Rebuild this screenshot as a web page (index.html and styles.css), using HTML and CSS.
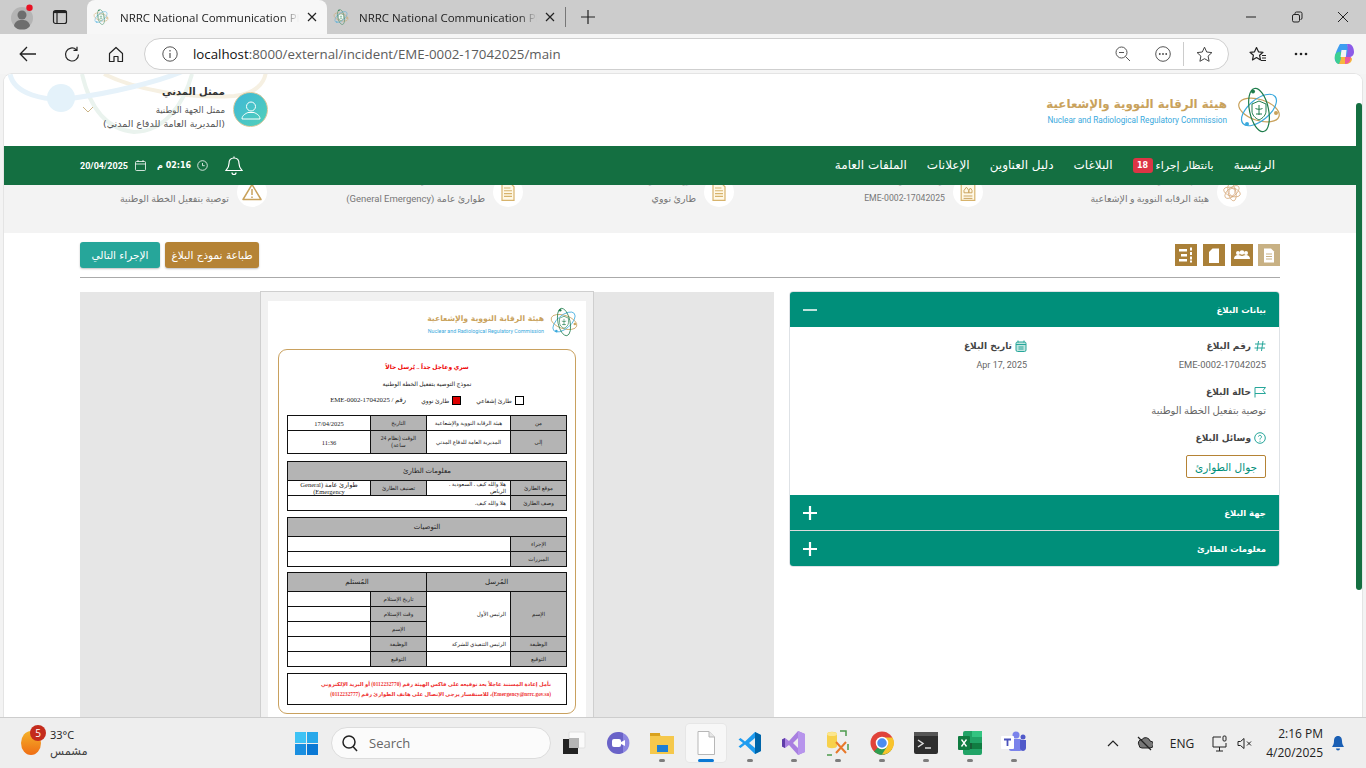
FILE: index.html
```html
<!DOCTYPE html>
<html lang="ar">
<head>
<meta charset="utf-8">
<title>NRRC National Communication Platform</title>
<link rel="stylesheet" href="styles.css">
</head>
<body>
<svg class="defs" aria-hidden="true">
  <symbol id="atom" viewBox="0 0 44 46">
    <ellipse cx="22" cy="23" rx="21" ry="10.5" transform="rotate(18 22 23)" fill="none" stroke="#c9a25c" stroke-width="1.2"/>
    <ellipse cx="22" cy="23" rx="21" ry="10.5" transform="rotate(-40 22 23)" fill="none" stroke="#3aa9dd" stroke-width="1.2"/>
    <ellipse cx="22" cy="23" rx="22" ry="9.5" transform="rotate(78 22 23)" fill="none" stroke="#1f7d4c" stroke-width="1.2"/>
    <circle cx="16" cy="4.500" r="2" fill="#1f7d4c"/>
    <circle cx="39" cy="26" r="2" fill="#c9a25c"/>
    <circle cx="10" cy="37" r="2" fill="#3aa9dd"/>
    <path d="M15 17l7-3 7 3v7c0 4-3 7-7 9-4-2-7-5-7-9z" fill="#fff" stroke="#1f7d4c" stroke-width="1"/>
    <path d="M22 18v10M18.500 21.500c2 1 5 1 7 0M19 27h6" stroke="#1f7d4c" stroke-width="1" fill="none"/>
  </symbol>
  <symbol id="atomgold" viewBox="0 0 44 46">
    <ellipse cx="22" cy="23" rx="21" ry="10.5" transform="rotate(18 22 23)" fill="none" stroke="#d6a878" stroke-width="1.800"/>
    <ellipse cx="22" cy="23" rx="21" ry="10.5" transform="rotate(-40 22 23)" fill="none" stroke="#d6a878" stroke-width="1.800"/>
    <ellipse cx="22" cy="23" rx="22" ry="9.5" transform="rotate(78 22 23)" fill="none" stroke="#d6a878" stroke-width="1.800"/>
    <path d="M15 17l7-3 7 3v7c0 4-3 7-7 9-4-2-7-5-7-9z" fill="#fff" stroke="#c98f5c" stroke-width="1.500"/>
  </symbol>
  <symbol id="report" viewBox="0 0 20 24">
    <path d="M2.500 1.500h11l4 4v17h-15z" fill="#fff8e6" stroke="#d7b36c" stroke-width="1.500"/>
    <path d="M5 7h8M5 10.500h10M5 14h10M5 17.500h10" stroke="#d7b36c" stroke-width="1.400"/>
  </symbol>
  <symbol id="reporthouse" viewBox="0 0 20 24">
    <path d="M1.500 1.500h17v21h-17z" fill="#fff8e6" stroke="#d7b36c" stroke-width="1.500"/>
    <path d="M5 10l3-4 3 4v3H5zM11 10l2-3 2 3v3h-4zM4.500 17h11M4.500 20h11" fill="none" stroke="#c9a25c" stroke-width="1.200"/>
  </symbol>
  <symbol id="plus" viewBox="0 0 14 14"><path d="M7 0v14M0 7h14" stroke="#fff" stroke-width="2.200"/></symbol>
</svg>

<div class="window">
  <header class="tabstrip">
    <div class="profile">
      <svg width="24" height="26" viewBox="0 0 24 26"><circle cx="12" cy="14" r="11" fill="#b4b4b4"/><circle cx="12" cy="11" r="4.500" fill="#6e6e6e"/><path d="M4 22c1-5 4-6 8-6s7 1 8 6c-2 3-5 3.500-8 3.500S6 25 4 22z" fill="#6e6e6e"/><circle cx="19.500" cy="3.800" r="3.200" fill="#e81123"/></svg>
    </div>
    <div class="tabicon">
      <svg width="16" height="16" viewBox="0 0 16 16"><rect x="1.500" y="1.500" width="13" height="13" rx="2" fill="none" stroke="#222" stroke-width="1.200"/><path d="M5 1.500v13" stroke="#222" stroke-width="1.200"/><path d="M1.500 3h13" stroke="#222" stroke-width="2.200"/></svg>
    </div>
    <div class="tab tab-active">
      <svg class="favicon" width="16" height="16"><use href="#atom"/></svg>
      <span class="tab-title">NRRC National Communication Platform</span>
      <svg class="tab-close" width="10" height="10" viewBox="0 0 10 10"><path d="M1 1l8 8M9 1l-8 8" stroke="#222" stroke-width="1.200"/></svg>
    </div>
    <div class="tab">
      <svg class="favicon" width="16" height="16"><use href="#atom"/></svg>
      <span class="tab-title">NRRC National Communication Platform</span>
      <svg class="tab-close" width="10" height="10" viewBox="0 0 10 10"><path d="M1 1l8 8M9 1l-8 8" stroke="#222" stroke-width="1.200"/></svg>
    </div>
    <div class="tabsep"></div>
    <svg class="newtab" width="14" height="14" viewBox="0 0 14 14"><path d="M7 0v14M0 7h14" stroke="#222" stroke-width="1.200"/></svg>
    <div class="winctl">
      <svg width="12" height="12" viewBox="0 0 12 12"><path d="M1 6h10" stroke="#222" stroke-width="1"/></svg>
      <svg width="12" height="12" viewBox="0 0 12 12"><rect x="1.500" y="3.500" width="7" height="7.500" rx="1.500" fill="none" stroke="#222"/><path d="M4 3V2.500A1.500 1.500 0 0 1 5.500 1H9.500A1.500 1.500 0 0 1 11 2.500V7A1.500 1.500 0 0 1 9.500 8.500" fill="none" stroke="#222"/></svg>
      <svg width="12" height="12" viewBox="0 0 12 12"><path d="M1 1l10 10M11 1L1 11" stroke="#222" stroke-width="1"/></svg>
    </div>
  </header>

  <nav class="toolbar">
    <svg class="tool tool-back" width="18" height="16" viewBox="0 0 18 16"><path d="M17 8H1.500M8 1L1.200 8 8 15" fill="none" stroke="#222" stroke-width="1.300"/></svg>
    <svg class="tool tool-reload" width="17" height="17" viewBox="0 0 17 17"><path d="M14.500 8.500a6.500 6.500 0 1 1-2.200-4.900M13 .8v3.500H9.500" fill="none" stroke="#222" stroke-width="1.200"/></svg>
    <svg class="tool tool-home" width="16" height="17" viewBox="0 0 16 17"><path d="M1.500 7.500L8 1.500l6.500 6v8h-4.500v-5H6v5H1.500z" fill="none" stroke="#222" stroke-width="1.200" stroke-linejoin="round"/></svg>
    <div class="urlbar">
      <svg class="url-info" width="16" height="16" viewBox="0 0 16 16"><circle cx="8" cy="8" r="7.200" fill="none" stroke="#555"/><path d="M8 7v5M8 4v1.500" stroke="#555" stroke-width="1.200"/></svg>
      <span class="url"><b>localhost</b>:8000/external/incident/EME-0002-17042025/main</span>
      <svg class="url-tool" width="16" height="16" viewBox="0 0 16 16"><circle cx="6.500" cy="6.500" r="5.500" fill="none" stroke="#555"/><path d="M10.500 10.500L15 15M4 6.500h5" stroke="#555"/></svg>
      <svg class="url-tool url-more" width="16" height="16" viewBox="0 0 16 16"><circle cx="8" cy="8" r="7.300" fill="none" stroke="#555"/><circle cx="4.800" cy="8" r=".9" fill="#444"/><circle cx="8" cy="8" r=".9" fill="#444"/><circle cx="11.200" cy="8" r=".9" fill="#444"/></svg>
      <span class="url-sep"></span>
      <svg class="url-tool url-star" width="17" height="17" viewBox="0 0 17 17"><path d="M8.500 1.200l2.200 4.800 5.200.6-3.800 3.500 1 5.200-4.600-2.600-4.600 2.600 1-5.200L1.100 6.600l5.200-.6z" fill="none" stroke="#444" stroke-linejoin="round"/></svg>
    </div>
    <svg class="tool tool-fav" width="18" height="17" viewBox="0 0 18 17"><path d="M7.500 1.500l2 4.300 4.500.5-3.400 3 .9 4.600-4-2.300-4 2.300.9-4.600-3.400-3 4.500-.5z" fill="none" stroke="#222" stroke-width="1.200" stroke-linejoin="round"/><path d="M13 9.500h4M13 12h4M12 14.500h5" stroke="#222"/></svg>
    <svg class="tool tool-dots" width="14" height="4" viewBox="0 0 14 4"><circle cx="2" cy="2" r="1.300" fill="#222"/><circle cx="7" cy="2" r="1.300" fill="#222"/><circle cx="12" cy="2" r="1.300" fill="#222"/></svg>
    <svg class="tool tool-copilot" width="22" height="22" viewBox="0 0 22 22">
      <path d="M7 1h7c1 3 3 8 2 13-1 3-3 6-5 7H6c-3-1-5-4-4-7 0-3 3-10 5-13z" fill="#3d9df0"/>
      <path d="M14 1h2c3 0 5 4 5 8 0 3-2 5-5 5h-3c2-4 2-9 1-13z" fill="#8c5be8"/>
      <path d="M2 12c1-3 4-4 6-3 1 3 0 8-2 12-3 0-5-5-4-9z" fill="#3ccf91"/>
      <path d="M8 14h8c2 0 3 1 3 2 0 3-3 5-6 5H6c1-2 2-5 2-7z" fill="#f6b73c"/>
      <path d="M12 14h6l-1 4c-1 2-3 3-5 3z" fill="#ee5a9c"/>
      <path d="M8.500 7h5l-.6 7H7.500z" fill="#f4f4f4"/>
    </svg>
  </nav>

  <div class="viewport">
    <main class="page" dir="rtl">
      <section class="masthead">
        <svg class="watermark" width="270" height="64" viewBox="0 0 270 64">
          <path d="M100 0C130 15 180 25 230 22C250 20 262 10 262 -5" fill="none" stroke="#f6f0e2" stroke-width="4"/>
          <path d="M78 0C85 30 100 55 130 58C160 58 180 30 188 0" fill="none" stroke="#eaf3ee" stroke-width="4"/>
          <path d="M6 0C10 20 40 28 70 24S160 8 190 -8" fill="none" stroke="#e6f2fa" stroke-width="5"/>
          <circle cx="57" cy="24" r="14" fill="#e4f2fa"/>
        </svg>
        <div class="brand">
          <svg class="brand-mark" width="44" height="46"><use href="#atom"/></svg>
          <div class="brand-text">
            <div class="brand-ar">هيئة الرقابة النووية والإشعاعية</div>
            <div class="brand-en" dir="ltr">Nuclear and Radiological Regulatory Commission</div>
          </div>
        </div>
        <div class="user">
          <div class="avatar">
            <svg width="22" height="22" viewBox="0 0 22 22"><circle cx="11" cy="7.500" r="4.500" fill="none" stroke="#fff"/><path d="M2 20c0-4 4-5.500 6-6.500h6c2 1 6 2.500 6 6.500z" fill="none" stroke="#fff"/></svg>
          </div>
          <div class="user-text">
            <div class="user-name">ممثل المدني</div>
            <div class="user-line">ممثل الجهة الوطنية</div>
            <div class="user-line user-org">(المديرية العامة للدفاع المدني)</div>
          </div>
          <svg class="user-caret" width="12" height="7" viewBox="0 0 12 7"><path d="M1 1l5 5 5-5" fill="none" stroke="#cbb486"/></svg>
        </div>
      </section>

      <section class="mainnav">
        <ul class="navlinks">
          <li>الرئيسية</li>
          <li class="nav-pending"><span class="nav-pending-label">بانتظار إجراء</span> <span class="navbadge">18</span></li>
          <li>البلاغات</li>
          <li>دليل العناوين</li>
          <li>الإعلانات</li>
          <li>الملفات العامة</li>
        </ul>
        <div class="navmeta">
          <svg class="bell" width="18" height="20" viewBox="0 0 18 20"><path d="M9 2c-3.500 0-5 2.500-5 5.500 0 3-1 5-3 7h16c-2-2-3-4-3-7C14 4.500 12.500 2 9 2zM7 16.500a2 2 0 0 0 4 0M9 .5V2" fill="none" stroke="#fff" stroke-width="1.200"/></svg>
          <svg width="11" height="11" viewBox="0 0 11 11"><circle cx="5.500" cy="5.500" r="4.800" fill="none" stroke="#fff" stroke-width=".8"/><path d="M5.500 3v2.700h2.200" fill="none" stroke="#fff" stroke-width=".8"/></svg>
          <span class="navtime">02:16 م</span>
          <svg class="navcal" width="11" height="11" viewBox="0 0 11 11"><rect x=".5" y="1.500" width="10" height="9" rx="1" fill="none" stroke="#fff" stroke-width=".8"/><path d="M.5 4h10M3 0v2M8 0v2" stroke="#fff" stroke-width=".8"/></svg>
          <span class="navdate">20/04/2025</span>
        </div>
      </section>

      <section class="summary">
        <div class="sumitem">
          <span class="sumicon"><svg width="18" height="20"><use href="#atomgold"/></svg></span>
          <div><div class="sumlabel">الجهة المرسلة</div><div class="sumvalue">هيئة الرقابه النووية و الإشعاعية</div></div>
        </div>
        <div class="sumitem">
          <span class="sumicon"><svg width="16" height="20"><use href="#reporthouse"/></svg></span>
          <div><div class="sumlabel">رقم البلاغ</div><div class="sumvalue sumvalue-num">EME-0002-17042025</div></div>
        </div>
        <div class="sumitem">
          <span class="sumicon"><svg width="16" height="20"><use href="#report"/></svg></span>
          <div><div class="sumlabel">نوع الطارئ</div><div class="sumvalue">طارئ نووي</div></div>
        </div>
        <div class="sumitem">
          <span class="sumicon"><svg width="16" height="20"><use href="#report"/></svg></span>
          <div><div class="sumlabel">تصنيف الطارئ</div><div class="sumvalue">طوارئ عامة (General Emergency)</div></div>
        </div>
        <div class="sumitem">
          <span class="sumicon"><svg width="20" height="18" viewBox="0 0 20 18"><path d="M10 1.500L19 16.500H1z" fill="none" stroke="#c9a25c" stroke-width="1.500" stroke-linejoin="round"/><path d="M10 6v6M10 13.500v1.500" stroke="#c9a25c" stroke-width="1.500"/></svg></span>
          <div><div class="sumlabel">الحالة</div><div class="sumvalue">توصية بتفعيل الخطة الوطنية</div></div>
        </div>
      </section>

      <section class="actions">
        <div class="viewtabs">
          <span class="viewtab viewtab-on"><svg width="12" height="15" viewBox="0 0 12 15"><path d="M1 .5h7l3 3v11H1z" fill="#fff"/><path d="M3 6h6M3 8.500h6M3 11h6" stroke="#c8b184"/></svg></span>
          <span class="viewtab"><svg width="16" height="10" viewBox="0 0 16 10"><circle cx="4" cy="3" r="2" fill="#fff"/><circle cx="12" cy="3" r="2" fill="#fff"/><circle cx="8" cy="2.500" r="2.300" fill="#fff"/><path d="M0 9c0-3 2-4 4-4s3 1 4 1 2-1 4-1 4 1 4 4z" fill="#fff"/></svg></span>
          <span class="viewtab"><svg width="10" height="15" viewBox="0 0 10 15"><path d="M3.500 .5H10v14.500H0V4z" fill="#fff"/></svg></span>
          <span class="viewtab"><svg width="14" height="16" viewBox="0 0 14 16"><path d="M0 2h8v2.500H0zM2 7h6v2.500H2zM0 12h8v2.500H0zM11 .5h2v3h-2zM11 5h2v3h-2zM11 9.500h2v3h-2zM11 13.500h2v2h-2z" fill="#fff"/></svg></span>
        </div>
        <div class="actionbtns">
          <span class="btn btn-gold">طباعة نموذج البلاغ</span>
          <span class="btn btn-teal">الإجراء التالي</span>
        </div>
      </section>

      <section class="workspace">
        <div class="accordion">
          <div class="acc-head">
            <span>بيانات البلاغ</span>
            <svg width="14" height="14" viewBox="0 0 14 14"><path d="M0 7h14" stroke="#fff" stroke-width="1.500"/></svg>
          </div>
          <div class="acc-body">
            <div class="field">
              <div class="field-label"><svg width="12" height="12" viewBox="0 0 12 12"><path d="M4.500 1L3 11M9 1L7.500 11M1 4h10.500M.5 8H11" stroke="#26a69a" stroke-width="1"/></svg>رقم البلاغ</div>
              <div class="field-value field-num">EME-0002-17042025</div>
            </div>
            <div class="field">
              <div class="field-label"><svg width="12" height="12" viewBox="0 0 12 12"><rect x="1" y="2" width="10" height="9.500" rx="1.500" fill="#bfe5df" stroke="#26a69a"/><path d="M3 .5v2M9 .5v2M1 4.500h10M3.500 7h5M3.500 9h5" stroke="#26a69a"/></svg>تاريخ البلاغ</div>
              <div class="field-value field-date">Apr 17, 2025</div>
            </div>
            <div class="field field-wide">
              <div class="field-label"><svg width="12" height="12" viewBox="0 0 12 12"><path d="M1 11.500V1.500h10.500L9 4.500l2.500 3H1" fill="none" stroke="#26a69a"/></svg>حالة البلاغ</div>
              <div class="field-value">توصية بتفعيل الخطة الوطنية</div>
            </div>
            <div class="field field-wide">
              <div class="field-label"><svg width="12" height="12" viewBox="0 0 12 12"><circle cx="6" cy="6" r="5.300" fill="none" stroke="#26a69a"/><path d="M4.500 4.500C4.500 3 7.500 3 7.500 4.800 7.500 6 6 6 6 7.500M6 8.800v1" fill="none" stroke="#26a69a"/></svg>وسائل البلاغ</div>
              <span class="chip">جوال الطوارئ</span>
            </div>
          </div>
          <div class="acc-head acc-closed">
            <span>جهة البلاغ</span>
            <svg width="14" height="14"><use href="#plus"/></svg>
          </div>
          <div class="acc-head acc-closed">
            <span>معلومات الطارئ</span>
            <svg width="14" height="14"><use href="#plus"/></svg>
          </div>
        </div>

        <div class="viewer">
          <div class="sheet">
            <div class="sheet-brand">
              <svg width="28" height="30"><use href="#atom"/></svg>
              <div>
                <div class="sheet-ar">هيئة الرقابة النووية والإشعاعية</div>
                <div class="sheet-en" dir="ltr">Nuclear and Radiological Regulatory Commission</div>
              </div>
            </div>
            <div class="form">
              <div class="form-title">سري وعاجل جداً .. يُرسل حالاً</div>
              <div class="form-sub">نموذج التوصية بتفعيل الخطة الوطنية</div>
              <div class="form-kinds">
                <span class="kind"><i class="box"></i>طارئ إشعاعي</span>
                <span class="kind"><i class="box box-on"></i>طارئ نووي</span>
                <span class="kind kind-no">رقم / EME-0002-17042025</span>
              </div>

              <table class="ft t1">
                <colgroup><col class="c1"><col class="c2"><col class="c3"><col class="c4"></colgroup>
                <tr class="r15"><th>من</th><td>هيئة الرقابة النووية والإشعاعية</td><th>التاريخ</th><td class="big">17/04/2025</td></tr>
                <tr class="r23"><th>إلى</th><td>المديرية العامة للدفاع المدني</td><th>الوقت (نظام 24<br>ساعة)</th><td class="big">11:36</td></tr>
              </table>

              <table class="ft t2">
                <colgroup><col class="c1"><col class="c2"><col class="c3"><col class="c4"></colgroup>
                <tr class="r19"><th colspan="4" class="head">معلومات الطارئ</th></tr>
                <tr class="r15"><th>موقع الطارئ</th><td class="ra">هلا والله كيف . السعودية .<br>الرياض</td><th>تصنيف الطارئ</th><td class="big">طوارئ عامة (General<br>Emergency)</td></tr>
                <tr class="r15"><th>وصف الطارئ</th><td colspan="3" class="ra">هلا والله كيف.</td></tr>
              </table>

              <table class="ft t3">
                <colgroup><col class="c1"><col class="c2"><col class="c3"><col class="c4"></colgroup>
                <tr class="r19"><th colspan="4" class="head">التوصيات</th></tr>
                <tr class="r15"><th>الإجراء</th><td colspan="3"></td></tr>
                <tr class="r15"><th>المبررات</th><td colspan="3"></td></tr>
              </table>

              <table class="ft">
                <colgroup><col class="c1"><col class="c2"><col class="c3"><col class="c4"></colgroup>
                <tr class="r19"><th colspan="2" class="head">المُرسل</th><th colspan="2" class="head">المُستلم</th></tr>
                <tr class="r15"><th rowspan="3">الإسم</th><td rowspan="3" class="ra">الرئيس الأول</td><th>تاريخ الإستلام</th><td></td></tr>
                <tr class="r15"><th>وقت الإستلام</th><td></td></tr>
                <tr class="r15"><th>الإسم</th><td></td></tr>
                <tr class="r15"><th>الوظيفة</th><td class="ra">الرئيس التنفيذي للشركة</td><th>الوظيفة</th><td></td></tr>
                <tr class="r15"><th>التوقيع</th><td></td><th>التوقيع</th><td></td></tr>
              </table>

              <div class="form-note">نأمل إعادة المستند عاجلاً بعد توقيعه على فاكس الهيئة رقم (0112232770) أو البريد الإلكتروني (Emergency@nrrc.gov.sa)، للاستفسار يرجى الإتصال على هاتف الطوارئ رقم (0112232777)</div>
            </div>
          </div>
        </div>
      </section>
    </main>
    <div class="scrolltrack"><div class="scrollthumb"></div></div>
  </div>

  <footer class="taskbar">
    <div class="weather">
      <span class="sun"></span>
      <span class="weather-badge">5</span>
      <div class="weather-text"><div>33°C</div><div class="weather-sub">مشمس</div></div>
    </div>
    <div class="tasks">
      <svg class="winlogo" width="23" height="23" viewBox="0 0 23 23"><rect width="11" height="11" fill="#3ec3f5"/><rect x="12" width="11" height="11" fill="#28a8ea"/><rect y="12" width="11" height="11" fill="#1a8fe0"/><rect x="12" y="12" width="11" height="11" fill="#0a78d4"/></svg>
      <div class="search">
        <svg width="16" height="17" viewBox="0 0 16 17"><circle cx="7" cy="7" r="6" fill="none" stroke="#222" stroke-width="1.500"/><path d="M11 11.500l4 4.500" stroke="#222" stroke-width="1.500"/></svg>
        <span>Search</span>
      </div>
      <div class="task"><svg width="24" height="24" viewBox="0 0 24 24"><rect x="7" y="1" width="16" height="16" rx="1" fill="#fafafa" stroke="#e0e0e0"/><rect x="7" y="7" width="10" height="10" fill="#b5b5b5"/><path d="M1 8h6v9h9v6H1z" fill="#222"/></svg></div>
      <div class="task"><svg width="24" height="24" viewBox="0 0 24 24"><path d="M12 1a11 11 0 1 0 0 22c2 0 4-.5 5-1V2c-1-.6-3-1-5-1z" fill="#6a63c8"/><path d="M17 2a11 11 0 0 1 0 20z" fill="#8d87e0"/><rect x="6" y="8" width="9" height="8" rx="2" fill="#fff"/><path d="M15 11l4-2v6l-4-2z" fill="#fff"/></svg></div>
      <div class="task"><svg width="26" height="24" viewBox="0 0 26 24"><path d="M1 2h9l2 3h13v18H1z" fill="#f5c84c"/><rect x="1" y="2" width="10" height="3" fill="#d9a21e"/><rect x="8" y="14" width="11" height="7" fill="#1d7ed6"/></svg><i class="pip"></i></div>
      <div class="task task-on"><svg width="18" height="24" viewBox="0 0 18 24"><path d="M1 .5h11l5.500 5.500v17.500H1z" fill="#fff" stroke="#b7b7b7"/><path d="M12 .5V6h5.500" fill="#e6e6e6" stroke="#b7b7b7"/></svg><i class="activebar"></i></div>
      <div class="task"><svg width="24" height="24" viewBox="0 0 24 24"><path d="M17 1l6 3v16l-6 3L7 13.500 2.500 17 .5 15.500 5 12 .5 8.500 2.500 7 7 10.500z" fill="#1f9cf0"/><path d="M17 7l-6 5 6 5z" fill="#eee"/><path d="M17 1l6 3v16l-6 3z" fill="#0065a9"/></svg><i class="pip"></i></div>
      <div class="task"><svg width="24" height="26" viewBox="0 0 24 26"><path d="M16 1l7 3v18l-7 3L7 15l-4 3-3-1.500V9.500L3 8l4 3z" fill="#a87fe0"/><path d="M16 8l-5 5 5 5z" fill="#eee"/><path d="M0 9.500L3 8v10l-3-1.500z" fill="#5e3ca8"/><path d="M16 1l7 3v18l-7 3z" fill="#b794ec"/></svg><i class="pip"></i></div>
      <div class="task"><svg width="24" height="26" viewBox="0 0 24 26"><path d="M1 4c0-3 10-3 10 0v12c0 3-10 3-10 0z" fill="#f7d14c"/><ellipse cx="6" cy="4" rx="5" ry="2" fill="#fbe68f"/><path d="M14 1h6v5M1 25h5M22 14v6" stroke="#4c9a4c" stroke-width="1.500" fill="none"/><path d="M10 12l10 11M20 12L10 23" stroke="#e8782a" stroke-width="2"/></svg><i class="pip"></i></div>
      <div class="task"><svg width="24" height="24" viewBox="0 0 24 24"><circle cx="12" cy="12" r="11.500" fill="#e0433a"/><path d="M12 12L22 18A11.500 11.500 0 0 1 4 20.500z" fill="#2f9e4f"/><path d="M12 6.500h10.500A11.500 11.500 0 0 1 12 23.500L18 14z" fill="#f8c42c"/><circle cx="12" cy="12" r="5.500" fill="#4a8df0" stroke="#fff" stroke-width="1.500"/></svg><i class="pip"></i></div>
      <div class="task"><svg width="24" height="22" viewBox="0 0 24 22"><rect width="24" height="22" rx="2" fill="#2e2e2e"/><rect width="24" height="4" fill="#555"/><path d="M4 8l5 3.500-5 3.500" fill="none" stroke="#ddd" stroke-width="1.500"/><path d="M11 16h6" stroke="#ddd" stroke-width="1.500"/></svg><i class="pip"></i></div>
      <div class="task"><svg width="24" height="24" viewBox="0 0 24 24"><rect x="5" width="19" height="24" rx="2" fill="#21a366"/><rect x="14" y="0" width="10" height="6" fill="#33c481"/><rect x="5" y="12" width="9" height="6" fill="#185c37"/><rect x="14" y="12" width="10" height="6" fill="#107c41"/><rect y="5" width="12" height="14" rx="1" fill="#107c41"/><path d="M3.500 8.500l5 7M8.500 8.500l-5 7" stroke="#fff" stroke-width="1.300"/></svg><i class="pip"></i></div>
      <div class="task"><svg width="26" height="24" viewBox="0 0 26 24"><circle cx="15" cy="4" r="3.500" fill="#7b83eb"/><circle cx="22" cy="6" r="2.500" fill="#5059c9"/><rect x="8" y="8" width="13" height="12" rx="2" fill="#7b83eb"/><path d="M19 9h6v8c0 2-2 3-3 3s-3-1-3-3z" fill="#5059c9"/><rect y="5" width="13" height="13" rx="1" fill="#fff"/><path d="M3 8.500h7M6.500 8.500V15" stroke="#4b53bc" stroke-width="1.800"/></svg><i class="pip"></i></div>
    </div>
    <div class="tray">
      <svg class="tray-up" width="12" height="7" viewBox="0 0 12 7"><path d="M1 6l5-5 5 5" fill="none" stroke="#222" stroke-width="1.200"/></svg>
      <svg class="tray-cloud" width="16" height="15" viewBox="0 0 16 15"><path d="M2 9a3.500 3.500 0 0 1 3-5.500A4.500 4.500 0 0 1 13 5a3.500 3.500 0 0 1 0 7H5A3 3 0 0 1 2 9z" fill="#777" stroke="#222"/><path d="M1 1l13 13" stroke="#222" stroke-width="1.200"/></svg>
      <span class="tray-lang">ENG</span>
      <svg class="tray-net" width="15" height="17" viewBox="0 0 15 17"><path d="M9 2H1v10h13V8M7.500 12v4M4 16h7" fill="none" stroke="#222"/><rect x="11" y="1" width="3" height="5" rx="1" fill="none" stroke="#222"/></svg>
      <svg class="tray-vol" width="15" height="13" viewBox="0 0 15 13"><path d="M1 4.500h2.500L7 1.500v10l-3.500-3H1z" fill="none" stroke="#222"/><path d="M10 4.500l4 4M14 4.500l-4 4" stroke="#222"/></svg>
      <div class="clock"><div>2:16 PM</div><div>4/20/2025</div></div>
      <svg class="tray-bell" width="14" height="16" viewBox="0 0 14 16"><path d="M7 1C4 1 3 3.500 3 6c0 3-1 4.500-2 6h12c-1-1.500-2-3-2-6 0-2.500-1-5-4-5z" fill="#1a5fb4"/><path d="M5 13.500a2 2 0 0 0 4 0z" fill="#1a5fb4"/></svg>
    </div>
  </footer>
</div>
</body>
</html>
```

FILE: styles.css
```css
* { box-sizing: border-box; }
html, body { margin: 0; padding: 0; height: 100%; overflow: hidden; }
body { font-family: "DejaVu Sans", "Noto Sans", sans-serif; color: #333; background: #f3f3f3; }
.defs { position: absolute; width: 0; height: 0; overflow: hidden; }
svg { display: block; flex: none; }

.window { display: flex; flex-direction: column; width: 1366px; height: 768px; }

/* tab strip */
.tabstrip { flex: none; height: 34px; background: #cccccc; display: flex; align-items: center; font-family: "Open Sans", sans-serif; }
.profile { width: 24px; margin-left: 10px; }
.tabicon { width: 16px; margin-left: 18px; }
.tab { width: 238px; height: 34px; display: flex; align-items: center; padding: 0 10px 0 6px; font-size: 11.500px; color: #222; }
.tabicon + .tab { margin-left: 19px; }
.tab-active { width: 240px; background: #f7f7f7; border-radius: 8px 8px 0 0; }
.favicon { margin-right: 6px; margin-left: 0; }
.tab-title { flex: 1; white-space: nowrap; overflow: hidden; margin-left: 5px; margin-right: 8px; -webkit-mask-image: linear-gradient(90deg, #000 90%, transparent); mask-image: linear-gradient(90deg, #000 90%, transparent); }
.tab-active + .tab .tab-title { margin-left: 4px; }
.tabsep { width: 1px; height: 20px; background: #777; }
.newtab { margin-left: 15px; }
.winctl { margin-left: auto; display: flex; gap: 34px; padding-right: 17px; }

/* toolbar */
.toolbar { flex: none; height: 40px; display: flex; align-items: center; background: #f5f5f5; padding-left: 19px; }
.tool-back { margin-right: 27px; }
.tool-reload { margin-right: 27px; }
.tool-home { margin-right: 20px; }
.urlbar { width: 1085px; height: 32px; background: #fff; border: 1px solid #cfcfcf; border-radius: 16px; display: flex; align-items: center; padding: 0 15px 0 17px; font-family: "Open Sans", sans-serif; font-size: 13.300px; color: #5c5c5c; }
.url { flex: 1; margin-left: 15px; white-space: nowrap; }
.url b { font-weight: 400; color: #111; }
.url-tool { margin-left: 16px; }
.url-more { margin-left: 24px; }
.url-sep { width: 1px; height: 24px; background: #ccc; margin-left: 12px; }
.url-star { margin-left: 12px; }
.tool-fav { margin-left: 20px; }
.tool-dots { margin-left: 27px; }
.tool-copilot { margin-left: 25px; }

/* page */
.viewport { flex: none; height: 643px; display: flex; margin-left: 4px; margin-right: 4px; background: #fff; border-radius: 8px 8px 0 0; overflow: hidden; box-shadow: 0 0 0 1px #e4e4e4; }
.page { width: 1352px; flex: none; height: 643px; overflow: hidden; position: relative; background: #fff; font-family: "DejaVu Sans", sans-serif; }
.scrolltrack { flex: 1; background: #fff; }
.scrollthumb { width: 6px; height: 487px; margin-top: 29px; background: #146f41; border-radius: 3px; }

.masthead { height: 72px; display: flex; justify-content: space-between; align-items: flex-start; padding: 13px 75px 0 76px; position: relative; }
.watermark { position: absolute; left: 0; top: 0; }
.brand { display: flex; align-items: center; gap: 10px; position: relative; }
.brand-ar { font-size: 11.900px; font-weight: 700; color: #c9a25c; line-height: 20px; white-space: nowrap; }
.brand-en { font-family: "Roboto", sans-serif; font-size: 8.200px; color: #3aa9dd; line-height: 12px; white-space: nowrap; text-align: right; }
.user { display: flex; align-items: flex-start; gap: 8px; position: relative; padding-left: 2px; }
.avatar { width: 35px; height: 35px; margin-top: 5px; border-radius: 50%; background: linear-gradient(135deg, #3fb7d8, #52d0b8); border: 1px solid #d9c79c; display: flex; align-items: center; justify-content: center; }
.user-text { width: 121px; }
.user-name { font-size: 10px; font-weight: 700; color: #333; line-height: 14px; margin-bottom: 4px; margin-top: -2px; white-space: nowrap; }
.user-line { font-size: 8.600px; color: #555; line-height: 14px; white-space: nowrap; }
.user-org { font-size: 9.500px; }
.user-caret { margin-right: 2px; margin-top: 19px; }

.mainnav { height: 39px; background: #146f41; color: #fff; display: flex; justify-content: space-between; align-items: center; padding: 0 81px 0 76px; position: relative; }
.navlinks { list-style: none; display: flex; gap: 20px; margin: 0; padding: 0; font-size: 12px; white-space: nowrap; }
.nav-pending { display: flex; align-items: center; gap: 3px; }
.nav-pending-label { font-size: 11px; }
.navbadge { background: #dc3545; color: #fff; font-size: 8px; font-weight: 700; width: 20px; height: 15px; border-radius: 3px; display: inline-flex; align-items: center; justify-content: center; }
.navmeta { display: flex; align-items: center; font-size: 8px; font-weight: 700; white-space: nowrap; }
.bell { margin-left: 17px; }
.navtime { margin-right: 6px; margin-left: 11px; }
.navcal { margin-left: 7px; }
.navdate { font-family: "Roboto", sans-serif; font-size: 9px; }

.summary { height: 48px; background: #f3f3f3; overflow: hidden; display: grid; grid-template-columns: 264px 249px 211px 256px 1fr; padding-right: 109px; padding-left: 76px; }
.sumitem { display: flex; gap: 8px; align-items: flex-start; margin-top: -8px; white-space: nowrap; }
.sumicon { width: 30px; height: 30px; background: #fff; border-radius: 50%; display: flex; align-items: center; justify-content: center; flex: none; }
.sumlabel { font-size: 10px; font-weight: 700; color: #333; line-height: 14px; margin-top: -4px; }
.sumvalue { font-family: "Roboto", "DejaVu Sans", sans-serif; font-size: 9.500px; color: #777; line-height: 15px; margin-top: 4px; }
.sumvalue-num { font-size: 8.700px; }

.actions { height: 45px; margin: 0 76px; border-bottom: 1px solid #aaa; display: flex; justify-content: space-between; align-items: flex-start; padding-top: 11px; }
.viewtabs { display: flex; gap: 6px; }
.viewtab { width: 22px; height: 22px; background: #aa8038; display: flex; align-items: center; justify-content: center; }
.viewtab-on { background: #c8b184; margin-left: -1px; }
.actionbtns { display: flex; gap: 5px; margin-top: -2px; }
.btn { height: 26px; border-radius: 3px; color: #fff; font-size: 10.500px; display: flex; align-items: center; justify-content: center; box-shadow: 0 1px 2px rgba(0,0,0,.25); white-space: nowrap; }
.btn-gold { width: 94px; background: #b58335; }
.btn-teal { width: 80px; background: #26a69a; }

.workspace { display: flex; gap: 15px; margin: 14px 76px 0; align-items: flex-start; }
.accordion { width: 491px; flex: none; margin-top: -1px; border: 1px solid #dee2e6; border-radius: 4px; overflow: hidden; }
.acc-head { height: 35px; background: #008f7a; color: #fff; font-size: 8.500px; font-weight: 700; display: flex; justify-content: space-between; align-items: center; padding: 0 13px; }
.acc-closed + .acc-closed { border-top: 1px solid #dcdcdc; height: 36px; }
.acc-body { height: 168px; display: grid; grid-template-columns: 239px 1fr; grid-auto-rows: 46px; padding: 11px 13px 0; align-content: start; }
.field-wide { grid-column: 1 / -1; }
.field-label { display: flex; align-items: center; gap: 3px; font-size: 9px; font-weight: 700; color: #444; line-height: 16px; margin-bottom: 3px; }
.field-value { font-family: "Roboto", "DejaVu Sans", sans-serif; font-size: 10px; color: #666; line-height: 16px; }
.field-num { font-size: 9.400px; }
.field-date { font-size: 9px; }
.chip { display: inline-flex; width: 80px; height: 23px; margin-top: 6px; align-items: center; justify-content: center; border: 1px solid #b58335; border-radius: 2px; color: #008f7a; font-size: 10.500px; background: #fff; }

.viewer { width: 694px; height: 430px; flex: none; background: #e6e6e6; display: flex; justify-content: center; }
.sheet { width: 332px; background: #fff; border: 7px solid #f1f1f1; border-top-width: 9px; outline: 1px solid #cfcfcf; height: 432px; font-family: "Liberation Serif", "DejaVu Sans", serif; }
.sheet-brand { display: flex; align-items: flex-start; gap: 6px; padding: 6px 8px 0; height: 48px; }
.sheet-ar { font-family: "DejaVu Sans", sans-serif; font-size: 7.700px; font-weight: 700; color: #c9a25c; line-height: 13px; white-space: nowrap; margin-top: 5px; }
.sheet-en { font-family: "Roboto", sans-serif; font-size: 5.300px; color: #3aa9dd; line-height: 8px; white-space: nowrap; text-align: right; margin-top: 2px; }
.form { margin: 0 10px; height: 365px; border: 1.500px solid #c9a15f; border-radius: 9px; padding: 13px 8px 0; }
.form-title { text-align: center; color: #e00; font-size: 6px; font-weight: 700; line-height: 9px; }
.form-sub { text-align: center; color: #222; font-size: 6px; line-height: 9px; margin-top: 8px; }
.form-kinds { display: flex; justify-content: center; gap: 15px; align-items: center; font-size: 6px; color: #222; margin: 6px 0 10px; height: 10px; white-space: nowrap; }
.kind { display: flex; align-items: center; gap: 3px; }
.kind-no { font-size: 6.800px; }
.box { width: 9px; height: 9px; border: 1px solid #000; background: #fff; }
.box-on { background: #d00; }
.ft { width: 100%; table-layout: fixed; border-collapse: collapse; margin-bottom: 7px; font-size: 5.500px; line-height: 7px; color: #222; }
.t2 { margin-bottom: 6px; }
.t3 { margin-bottom: 5px; }
.c1 { width: 56px; }
.c2 { width: 84px; }
.c3 { width: 56px; }
.ft th, .ft td { border: 1px solid #111; padding: 0 1px; text-align: center; font-weight: 400; overflow: hidden; }
.ft th { background: #b4b4b4; }
.ft td { background: #fff; }
.ft .head { font-size: 7px; background: #b4b4b4; }
.ft .big { font-size: 6.500px; }
.ft .ra { text-align: right; padding-right: 4px; }
.r15 { height: 15px; }
.r19 { height: 19px; }
.r23 { height: 23px; }
.form-note { border: 1px solid #111; height: 32px; display: flex; align-items: center; text-align: right; padding: 0 15px 0 8px; color: #e33; font-size: 5.300px; line-height: 10px; font-weight: 700; margin-top: -1px; }

/* taskbar */
.taskbar { flex: none; height: 51px; background: #eeeeee; border-top: 1px solid #cdcdcd; display: flex; align-items: center; position: relative; font-family: "Open Sans", sans-serif; color: #222; }
.weather { width: 295px; display: flex; align-items: center; padding-left: 21px; position: relative; height: 100%; }
.sun { width: 20px; height: 24px; border-radius: 50%; background: linear-gradient(180deg, #f4b22a, #ef6d14); }
.weather-badge { position: absolute; left: 30px; top: 7px; width: 16px; height: 16px; border-radius: 50%; background: #c42b1c; color: #fff; font-size: 10px; display: flex; align-items: center; justify-content: center; }
.weather-text { margin-left: 9px; font-size: 11px; line-height: 16px; }
.weather-sub { font-family: "DejaVu Sans", sans-serif; font-size: 11.500px; color: #444; }
.tasks { display: flex; align-items: center; }
.winlogo { margin-right: 13px; }
.search { width: 220px; height: 32px; border: 1px solid #dcdcdc; border-radius: 16px; background: #fbfbfb; display: flex; align-items: center; gap: 11px; padding-left: 10px; font-size: 13px; color: #666; margin-right: 1px; }
.task { width: 44px; height: 38px; display: flex; align-items: center; justify-content: center; position: relative; flex: none; }
.task-on { background: #f7f7f7; border-radius: 4px; box-shadow: 0 0 0 1px #e6e6e6; width: 40px; margin: 0 2px; }
.pip { position: absolute; left: 50%; bottom: 0; margin-left: -3px; width: 6px; height: 3px; border-radius: 2px; background: #7d7d7d; }
.activebar { position: absolute; left: 50%; bottom: 0; margin-left: -8px; width: 16px; height: 3px; border-radius: 2px; background: #0a78d4; }
.tray { position: absolute; right: 0; top: 0; height: 50px; display: flex; align-items: center; font-size: 12px; }
.tray-up { margin-right: 18px; }
.tray-cloud { margin-right: 17px; }
.tray-lang { margin-right: 18px; }
.tray-net { margin-right: 10px; }
.tray-vol { margin-right: 14px; }
.clock { text-align: right; line-height: 19px; margin-right: 8px; }
.tray-bell { margin-right: 21px; }
```
